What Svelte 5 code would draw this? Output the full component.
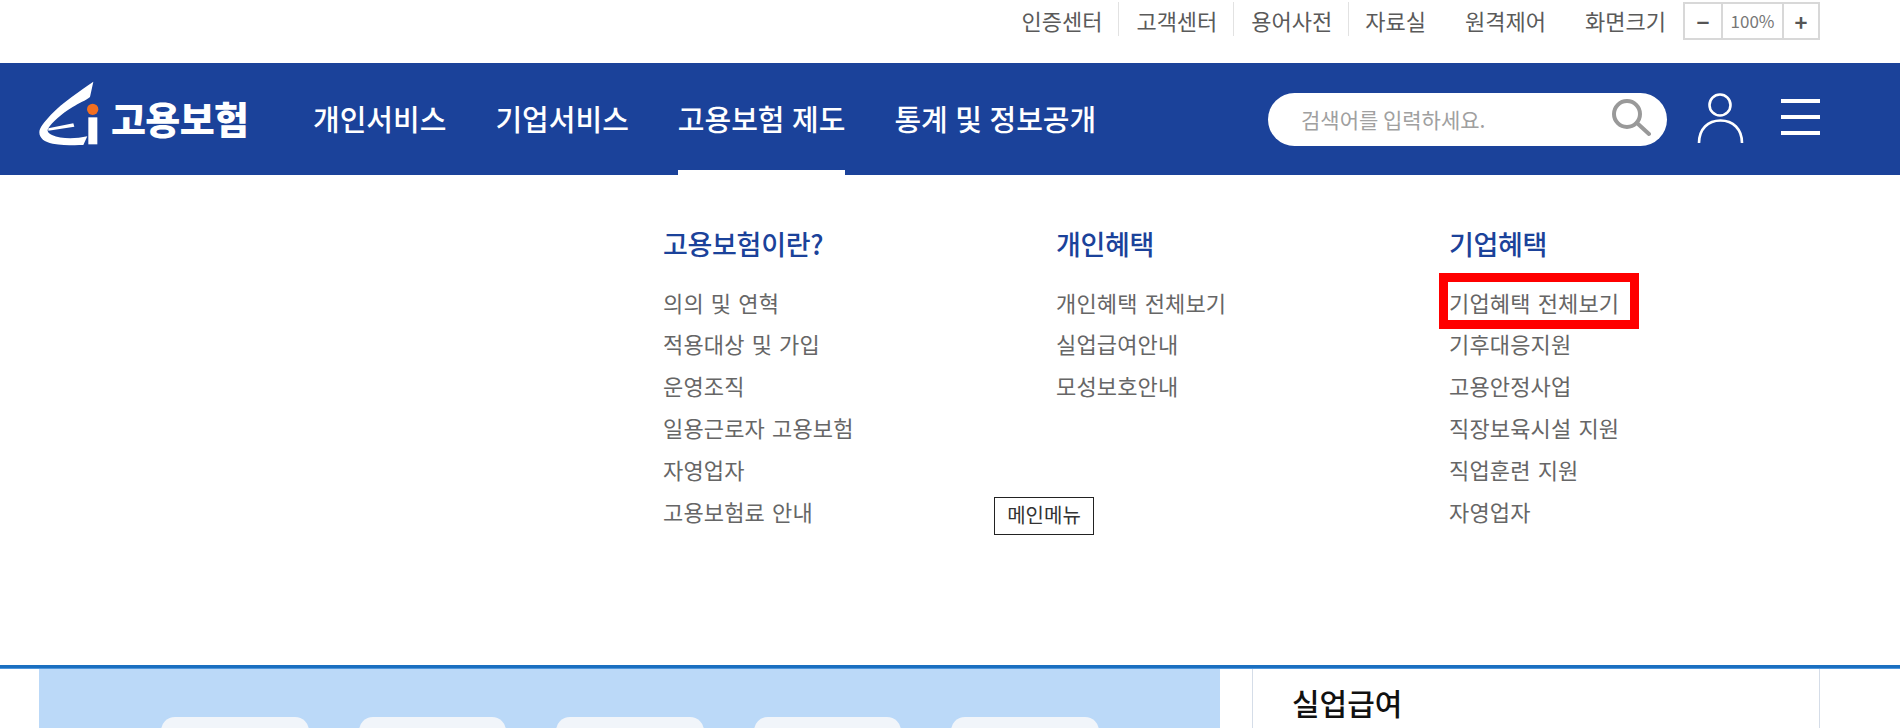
<script>
  const topLinks = [
    { label: '인증센터', sep: true },
    { label: '고객센터', sep: true },
    { label: '용어사전', sep: true },
    { label: '자료실' },
    { label: '원격제어' },
    { label: '화면크기' }
  ]
  const nav = ['개인서비스', '기업서비스', '고용보험 제도', '통계 및 정보공개']
  const columns = [
    { title: '고용보험이란?', items: ['의의 및 연혁', '적용대상 및 가입', '운영조직', '일용근로자 고용보험', '자영업자', '고용보험료 안내'] },
    { title: '개인혜택', items: ['개인혜택 전체보기', '실업급여안내', '모성보호안내'] },
    { title: '기업혜택', items: ['기업혜택 전체보기', '기후대응지원', '고용안정사업', '직장보육시설 지원', '직업훈련 지원', '자영업자'] }
  ]
</script>

<div class="page">
  <div class="util">
    {#each topLinks as link}
      <a class="util-link" class:sep={link.sep} href="#top">{link.label}</a>
    {/each}
    <div class="zoom">
      <span class="zbtn">−</span>
      <span class="zval">100%</span>
      <span class="zbtn">+</span>
    </div>
  </div>

  <header class="bar">
    <div class="logo">
      <svg class="mark-svg" width="70" height="80" viewBox="0 0 210 240">
        <path d="M190 20 C150 48 100 80 62 120 C42 142 28 158 28 172 C28 190 44 202 68 206 C100 211 135 211 160 210 L172 184 C135 192 92 192 66 180 C54 174 50 168 55 160 C66 142 92 118 128 96 C146 85 168 76 180 66 Z" fill="#fff" />
        <path d="M55 160 L130 145 L133 155 L55 167 Z" fill="#fff" />
        <rect x="175" y="127" width="27" height="81" fill="#fff" />
        <circle cx="188" cy="103" r="17" fill="#f26f21" />
      </svg>
      <span class="logo-text">고용보험</span>
    </div>
    <nav class="gnb">
      {#each nav as item, i}
        <a class="gnb-item" class:active={i === 2} href="#top">{item}</a>
      {/each}
    </nav>
    <div class="search">
      <span class="ph">검색어를 입력하세요.</span>
      <svg width="40" height="40" viewBox="0 0 40 40" fill="none" stroke="#999">
        <circle cx="16" cy="15" r="13" stroke-width="4" />
        <path d="M26 24 L38 35" stroke-width="4" stroke-linecap="round" />
      </svg>
    </div>
    <svg class="user" width="48" height="52" viewBox="0 0 48 52" fill="none" stroke="#fff" stroke-width="2.6">
      <circle cx="23" cy="13" r="10.5" />
      <path d="M2 51 C2 37 11 28.5 23.500 28.500 C36 28.500 45 37 45 51" />
    </svg>
    <div class="burger"><i></i><i></i><i></i></div>
  </header>

  <section class="mega">
    {#each columns as col, c}
      <div class="col">
        <h3>{col.title}</h3>
        <ul>
          {#each col.items as item, i}
            <li><a href="#top" class:mark={c === 2 && i === 0}>{item}</a></li>
          {/each}
        </ul>
      </div>
    {/each}
    <a class="skip" href="#top">메인메뉴</a>
  </section>

  <div class="rule"></div>

  <div class="content">
    <div class="panel">
      <div class="tab"></div>
      <div class="tab"></div>
      <div class="tab"></div>
      <div class="tab"></div>
      <div class="tab"></div>
    </div>
    <aside class="side">
      <h2>실업급여</h2>
    </aside>
  </div>
</div>

<style>
  :global(body) {
    margin: 0;
    background: #fff;
  }

  .page {
    height: 728px;
    overflow: hidden;
    font-family: "Noto Sans CJK KR", "Noto Sans", sans-serif;
    color: #555;
  }

  a {
    color: inherit;
    text-decoration: none;
  }

  .util {
    height: 63px;
    box-sizing: border-box;
    padding: 2px 80px 0 0;
    display: flex;
    justify-content: flex-end;
    align-items: flex-start;
  }

  .util-link {
    font-size: 22px;
    line-height: 37px;
    height: 34px;
    margin-left: 39px;
    white-space: nowrap;
    color: #5a5a5a;
  }

  .util-link.sep {
    margin-left: 0;
    padding: 0 16px 0 17px;
    border-right: 1px solid #e2e2e2;
  }

  .util-link.sep + .util-link:not(.sep) {
    margin-left: 16px;
  }

  .zoom {
    display: flex;
    margin-left: 17px;
    height: 38px;
    border: 2px solid #d8d8d8;
    box-sizing: border-box;
    font-size: 17px;
    line-height: 34px;
    color: #777;
  }

  .zbtn {
    width: 36px;
    text-align: center;
    font-weight: 700;
    color: #555;
    font-size: 22px;
  }

  .zbtn:last-child {
    width: 34px;
  }

  .zval {
    width: 59px;
    text-align: center;
    border-left: 2px solid #d8d8d8;
    border-right: 2px solid #d8d8d8;
  }

  .bar {
    height: 112px;
    background: #1b429a;
    display: flex;
    align-items: center;
    padding: 0 80px 0 30px;
    color: #fff;
  }

  .logo {
    display: flex;
    align-items: center;
    width: 283px;
    flex: none;
    gap: 11px;
  }

  .mark-svg {
    margin-top: -8px;
  }

  .logo-text {
    font-size: 38px;
    font-weight: 900;
    line-height: 50px;
    letter-spacing: -0.6px;
    margin-top: -2px;
  }

  .gnb {
    display: flex;
    gap: 49px;
    align-self: stretch;
  }

  .gnb-item {
    font-size: 29px;
    font-weight: 500;
    line-height: 110px;
    word-spacing: 1px;
    color: #fff;
    white-space: nowrap;
    box-sizing: border-box;
  }

  .gnb-item.active {
    border-bottom: 5px solid #fff;
  }

  .search {
    margin-left: auto;
    width: 399px;
    height: 53px;
    background: #fff;
    border-radius: 27px;
    display: flex;
    align-items: center;
    justify-content: space-between;
    box-sizing: border-box;
    padding: 0 16px 0 33px;
  }

  .ph {
    font-size: 21px;
    color: #a0a0a0;
  }

  .user {
    margin-left: 30px;
    margin-top: -3px;
  }

  .burger {
    margin-left: 36px;
    margin-top: -4px;
    width: 39px;
    display: flex;
    flex-direction: column;
    gap: 12px;
  }

  .burger i {
    display: block;
    height: 4px;
    background: #fff;
  }

  .mega {
    position: relative;
    height: 490px;
    box-sizing: border-box;
    padding: 49px 0 0 663px;
    display: flex;
  }

  .col {
    width: 393px;
  }

  h3 {
    margin: 0 0 16px;
    font-size: 27px;
    font-weight: 500;
    line-height: 40px;
    color: #1b429a;
    letter-spacing: -0.3px;
  }

  ul {
    margin: 0;
    padding: 0;
    list-style: none;
  }

  li {
    display: flow-root;
    height: 42px;
    font-size: 22px;
    line-height: 42px;
    color: #666;
    letter-spacing: 0.15px;
    word-spacing: 2px;
  }

  li:first-child {
    line-height: 44px;
  }

  .mark {
    display: block;
    box-sizing: border-box;
    width: 182px;
    height: 38px;
    margin: 2px 0 0 -1px;
    padding-left: 1px;
    line-height: 40px;
    outline: 9px solid #f00;
  }

  .skip {
    position: absolute;
    left: 994px;
    top: 322px;
    width: 100px;
    height: 38px;
    box-sizing: border-box;
    border: 1px solid #222;
    text-align: center;
    font-size: 20px;
    line-height: 34px;
    color: #333;
  }

  .rule {
    height: 3px;
    background: #1a6fc0;
    border-bottom: 1px solid #4f97dd;
  }

  .content {
    display: flex;
    padding-left: 39px;
  }

  .panel {
    width: 1181px;
    height: 59px;
    background: #bbd9f8;
    display: flex;
    align-items: flex-start;
    box-sizing: border-box;
    padding: 48px 0 0 122px;
    gap: 50px;
  }

  .tab {
    width: 147.5px;
    height: 30px;
    flex: none;
    background: #f1f5fa;
    border-radius: 14px 14px 0 0;
  }

  .side {
    margin-left: 32px;
    width: 568px;
    height: 59px;
    border: solid #d5dde8;
    border-width: 0 1px;
    box-sizing: border-box;
    padding: 13px 0 0 39px;
  }

  h2 {
    margin: 0;
    font-size: 30px;
    font-weight: 500;
    line-height: 40px;
    color: #111;
  }
</style>
